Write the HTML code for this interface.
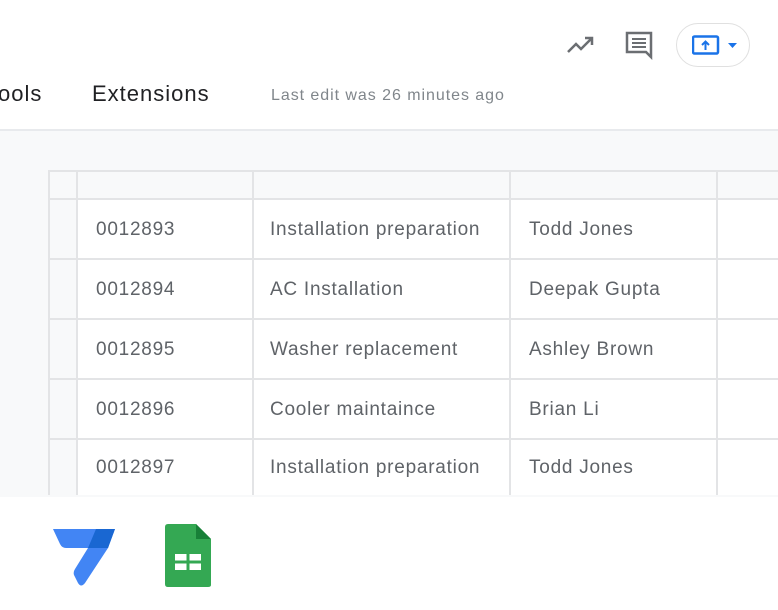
<!DOCTYPE html>
<html><head><style>
body{margin:0;width:778px;height:610px;overflow:hidden;background:#fff;font-family:"Liberation Sans",sans-serif;position:relative}
.a{position:absolute}
.bg{left:0;top:129px;width:778px;height:366px;background:#f8f9fa;border-top:2px solid #e8eaed}
.c{position:absolute;color:#5f6368;font-size:19px;white-space:nowrap;letter-spacing:0.75px}
.hl{position:absolute;height:2px;background:#e3e4e6}
.vl{position:absolute;width:2px;background:#e3e4e6}
</style></head><body>
<div class="a" style="left:-2px;top:81px;font-size:22px;color:#202124;letter-spacing:1px">ools</div>
<div class="a" style="left:92px;top:81px;font-size:22px;color:#202124;letter-spacing:1px">Extensions</div>
<div class="a" style="left:271px;top:87px;font-size:16px;color:#80868b;letter-spacing:0.95px">Last edit was 26 minutes ago</div>
<svg class="a" style="left:566px;top:34px" width="30" height="22" viewBox="0 0 30 22"><path d="M2 18 L10 10 L15 15 L26 4 M19 4 H26 V11" stroke="#6b6e72" stroke-width="2.5" fill="none"/></svg>
<svg class="a" style="left:624px;top:30px" width="30" height="30" viewBox="0 0 30 30"><path d="M3 3 H27 V27 L22 22 H3 Z" fill="none" stroke="#6b6e72" stroke-width="2.5"/><path d="M8 9H22M8 13H22M8 17H22" stroke="#6b6e72" stroke-width="2"/></svg>
<div class="a" style="left:676px;top:23px;width:72px;height:42px;border:1px solid #e0e0e0;border-radius:22px;background:#fff"></div>
<svg class="a" style="left:692px;top:35px" width="50" height="20" viewBox="0 0 50 20"><rect x="1" y="1.5" width="25" height="17" rx="1.5" fill="none" stroke="#1a73e8" stroke-width="2.5"/><path d="M13.5 15V7M10 10l3.5-3.5L17 10" stroke="#1a73e8" stroke-width="2" fill="none"/><path d="M36 8h9l-4.5 5z" fill="#1a73e8"/></svg>
<div class="a bg"></div>
<div class="a" style="left:49px;top:171px;width:740px;height:324px;background:#fff"></div>
<div class="a" style="left:49px;top:171px;width:740px;height:28px;background:#f8f9fa"></div>
<div class="a" style="left:49px;top:171px;width:28px;height:324px;background:#f8f9fa"></div>
<div class="hl" style="left:49px;top:170px;width:729px"></div>
<div class="hl" style="left:49px;top:198px;width:729px"></div>
<div class="hl" style="left:49px;top:258px;width:729px"></div>
<div class="hl" style="left:49px;top:318px;width:729px"></div>
<div class="hl" style="left:49px;top:378px;width:729px"></div>
<div class="hl" style="left:49px;top:438px;width:729px"></div>
<div class="vl" style="left:48px;top:170px;height:325px"></div>
<div class="vl" style="left:76px;top:170px;height:325px"></div>
<div class="vl" style="left:252px;top:170px;height:325px"></div>
<div class="vl" style="left:509px;top:170px;height:325px"></div>
<div class="vl" style="left:716px;top:170px;height:325px"></div>
<div class="c" style="left:96px;top:219px">0012893</div><div class="c" style="left:270px;top:219px">Installation preparation</div><div class="c" style="left:529px;top:219px">Todd Jones</div>
<div class="c" style="left:96px;top:279px">0012894</div><div class="c" style="left:270px;top:279px">AC Installation</div><div class="c" style="left:529px;top:279px">Deepak Gupta</div>
<div class="c" style="left:96px;top:339px">0012895</div><div class="c" style="left:270px;top:339px">Washer replacement</div><div class="c" style="left:529px;top:339px">Ashley Brown</div>
<div class="c" style="left:96px;top:399px">0012896</div><div class="c" style="left:270px;top:399px">Cooler maintaince</div><div class="c" style="left:529px;top:399px">Brian Li</div>
<div class="c" style="left:96px;top:457px">0012897</div><div class="c" style="left:270px;top:457px">Installation preparation</div><div class="c" style="left:529px;top:457px">Todd Jones</div>
<svg class="a" style="left:52px;top:528px" width="64" height="58" viewBox="0 0 64 58"><path d="M1 1 H63 L56 20 H14 Q10 20 8 16 Z" fill="#4285f4"/><path d="M44 1 H63 L56 20 H36 Z" fill="#1967d2"/><path d="M36 20 H56 L33 55 Q29 60 26 55 L22 47 Q21 44 23 41 Z" fill="#4285f4"/></svg>
<svg class="a" style="left:165px;top:524px" width="46" height="64" viewBox="0 0 46 64"><path d="M3 0 H31 L46 15 V61 Q46 63 43 63 H3 Q0 63 0 60 V3 Q0 0 3 0Z" fill="#34a853"/><path d="M31 0 L46 15 H31Z" fill="#188038"/><rect x="10" y="30" width="26" height="16" fill="#fff"/><path d="M10 38H36M23 30V46" stroke="#34a853" stroke-width="3"/></svg>
</body></html>
